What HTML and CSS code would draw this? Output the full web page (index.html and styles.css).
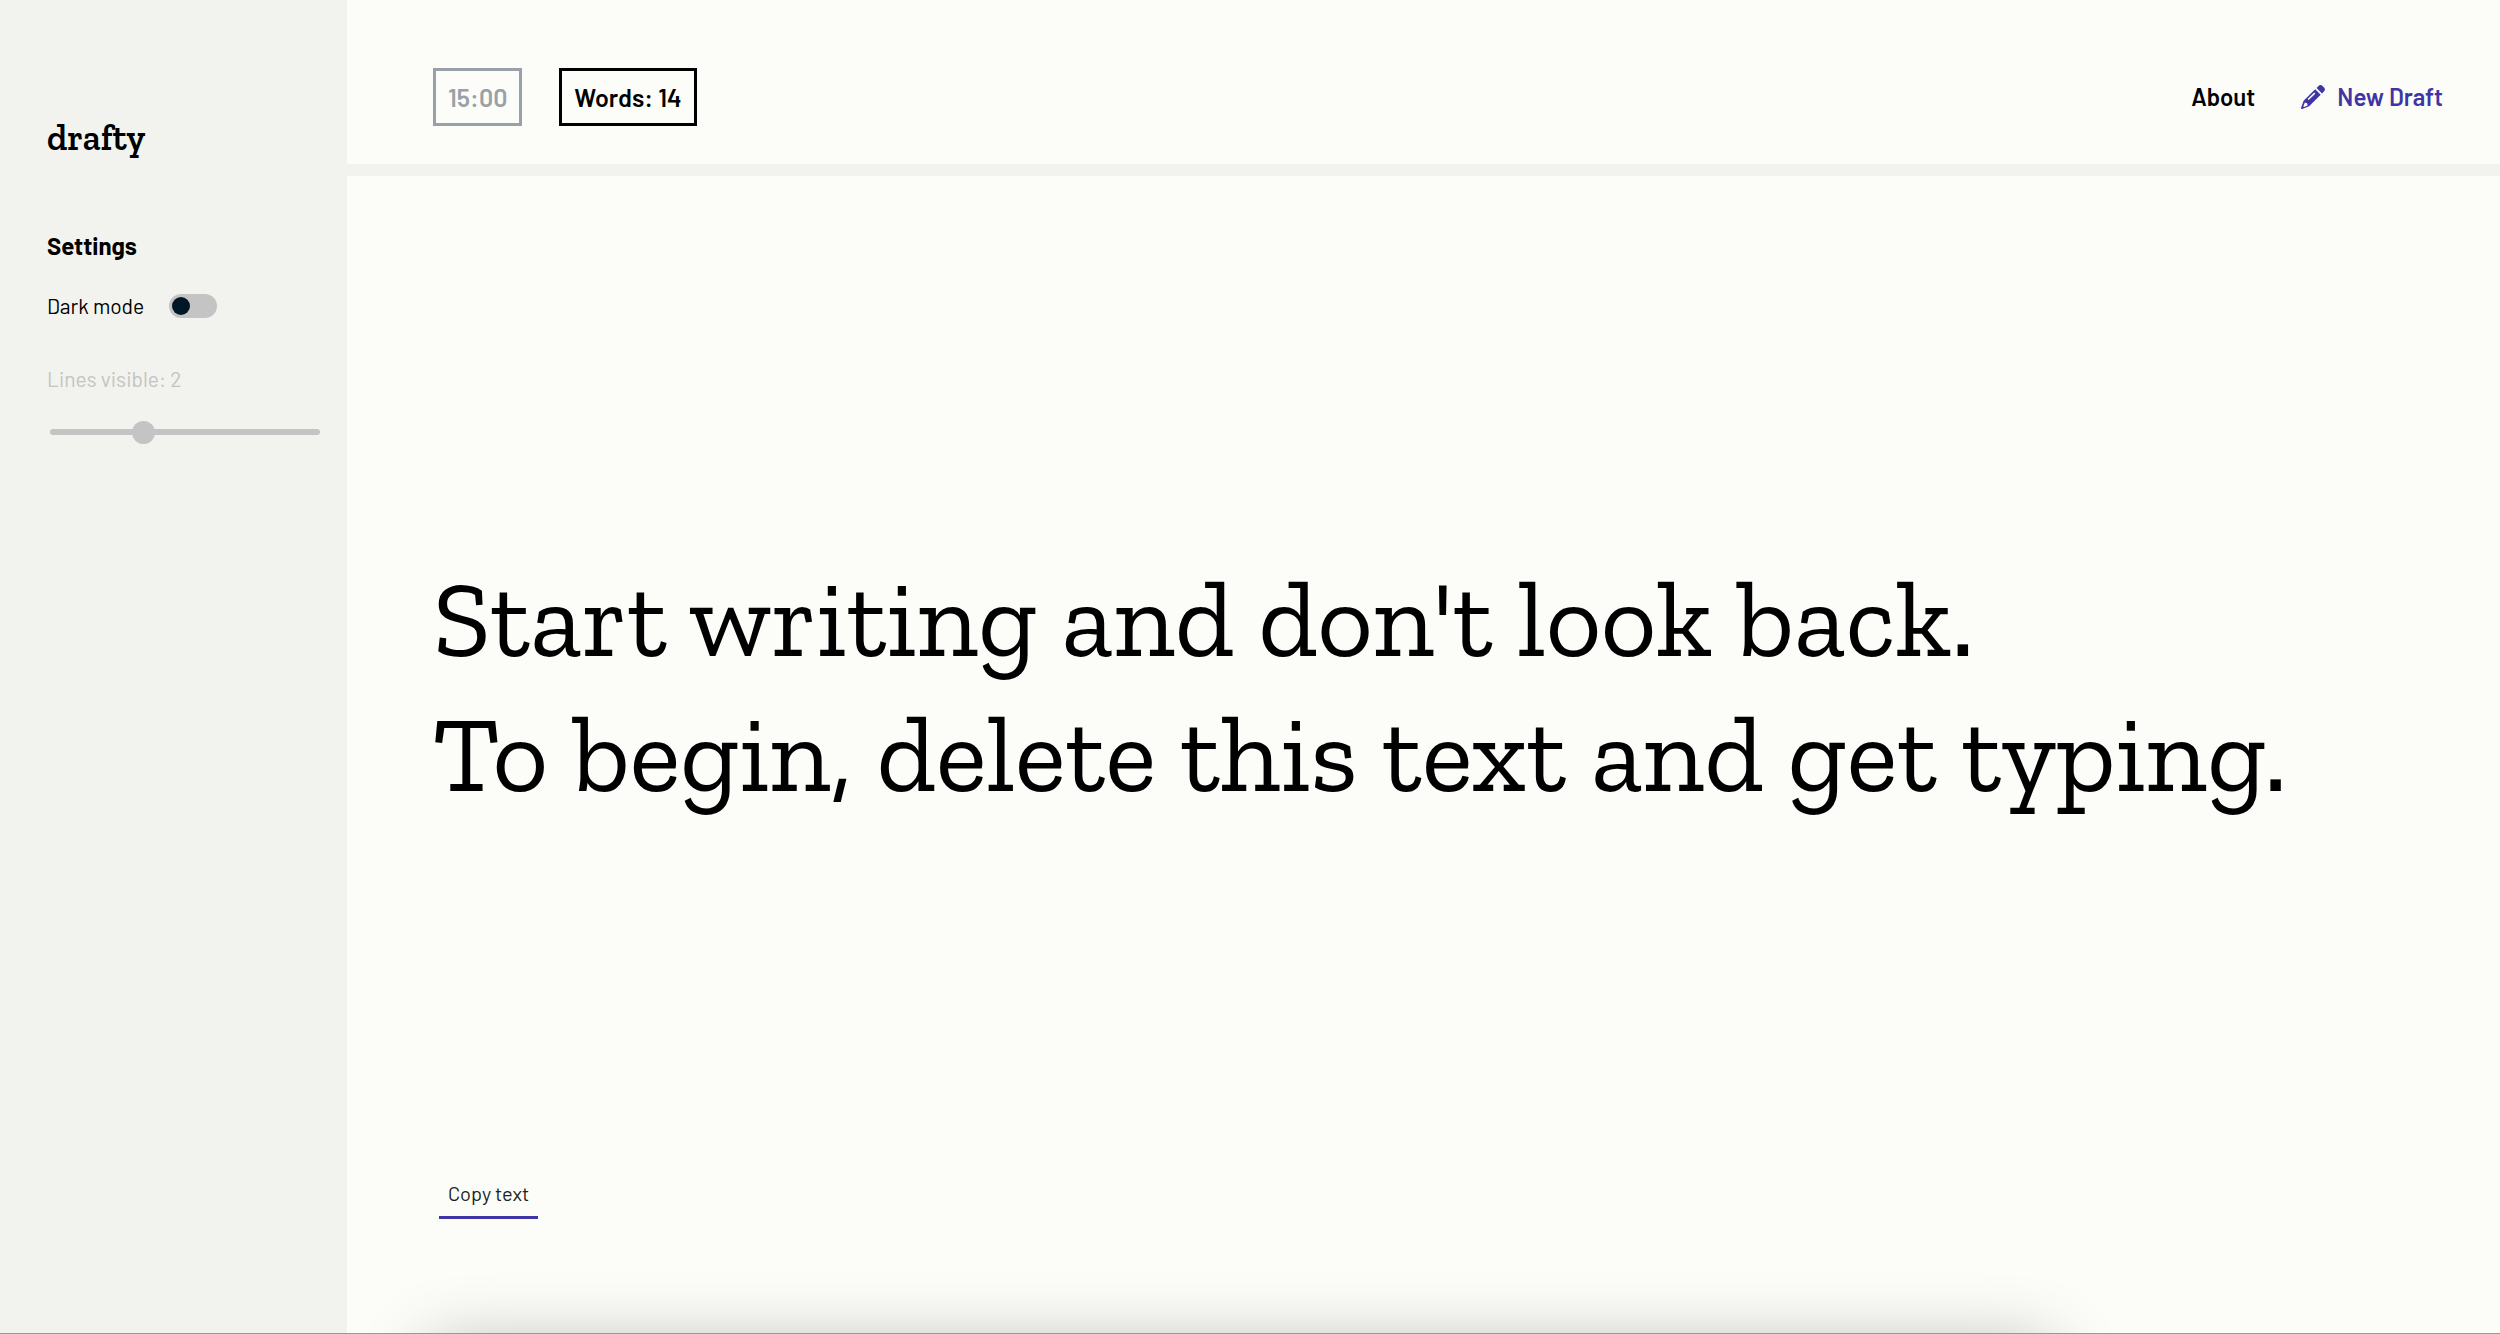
FILE: index.html
```html
<!DOCTYPE html>
<html lang="en">
  <head>
    <meta charset="UTF-8" />
    <meta name="viewport" content="width=device-width, initial-scale=1" />
    <title>drafty</title>
    <link rel="stylesheet" href="styles.css">
  </head>
  <body>
    <div class="app">
      <aside class="sidebar">
        <h1 class="logo">drafty</h1>
        <h2 class="settings-title">Settings</h2>
        <div class="setting-row">
          <label for="darkMode">Dark mode</label>
          <input type="checkbox" id="darkMode" class="toggle" />
        </div>
        <label for="lines" class="lines-label">Lines visible: <span id="linesValue">2</span></label>
        <input type="range" id="lines" class="slider" min="1" max="4" value="2" disabled />
      </aside>

      <div class="page">
        <header class="header">
          <div class="stats">
            <div class="stat timer">15:00</div>
            <div class="stat">Words: <span id="wordCount">14</span></div>
          </div>
          <nav class="nav">
            <a href="#about">About</a>
            <a href="#new" class="new-draft">
              <svg class="pencil" viewBox="0 0 24 24" aria-hidden="true">
                <path fill="currentColor" fill-rule="evenodd" d="M14.2 4.3 19.7 9.8 8.1 21.3 1.3 24Q0 24.2 0 22.9L2.6 15.8ZM13.2 7.6 6.6 14 7.7 15.1 14.3 8.7ZM3.9 17.6 2.3 21.4 3.1 22.1 6.6 20.6 6.1 18.2Z"/>
                <path fill="currentColor" d="M15.6 3 17.5 1.1Q19.6-.9 21.8 1.2L22.8 2.2Q25 4.4 22.9 6.5L21 8.4Z"/>
              </svg>
              New Draft
            </a>
          </nav>
        </header>

        <main class="main">
          <textarea id="draft" class="draft" rows="2" spellcheck="false" aria-label="Draft">Start writing and don't look back.
To begin, delete this text and get typing.</textarea>
          <button id="copyBtn" class="copy-btn">Copy text</button>
        </main>
      </div>
      <div class="bottom-shadow"></div>
    </div>
    <script>
      const draft = document.getElementById("draft");

      draft.addEventListener("input", function () {
        const words = draft.value.trim().split(/\s+/).filter(Boolean);
        document.getElementById("wordCount").textContent = words.length;
      });

      document.getElementById("copyBtn").addEventListener("click", function () {
        draft.select();
        document.execCommand("copy");
      });
    </script>
  </body>
</html>
```
FILE: styles.css
```css
* {
  box-sizing: border-box;
}
body {
  margin: 0;
  font-family: Barlow, Roboto, sans-serif;
  font-size: 21px;
  color: #000;
  background-color: #fcfdf8;
}
.app {
  position: relative;
  display: flex;
  min-height: 100vh;
  overflow: hidden;
  border-bottom: 1px solid #999;
}

/* Sidebar */
.sidebar {
  flex: 0 0 347px;
  padding: 116px 24px 0 47px;
  background-color: #f2f3ee;
}
.logo {
  margin: 0 0 66px;
  font-family: "Zilla Slab", "DejaVu Serif Condensed", "DejaVu Serif", serif;
  font-size: 36px;
  line-height: 44px;
  font-weight: 600;
}
.settings-title {
  margin: 0 0 26px;
  font-size: 24px;
  line-height: 40px;
}
.setting-row {
  display: flex;
  align-items: center;
  gap: 25px;
  margin-bottom: 45px;
  line-height: 28px;
}
.toggle {
  appearance: none;
  width: 48px;
  height: 24px;
  margin: 0;
  padding: 3px;
  border-radius: 12px;
  background-color: #c4c4c4;
  cursor: pointer;
}
.toggle::before {
  content: "";
  display: block;
  width: 18px;
  height: 18px;
  border-radius: 50%;
  background-color: #011627;
}
.toggle:checked::before {
  margin-left: auto;
}
.lines-label {
  display: block;
  line-height: 28px;
  color: #c4c4c4;
}
.slider {
  appearance: none;
  display: block;
  width: 270px;
  height: 6px;
  margin: 36px 3px 0;
  border-radius: 3px;
  background-color: #c4c4c4;
}
.slider::-webkit-slider-thumb {
  appearance: none;
  width: 23px;
  height: 23px;
  border-radius: 50%;
  background-color: #c4c4c4;
}

/* Header */
.page {
  flex: 1;
  display: flex;
  flex-direction: column;
  min-width: 0;
}
.header {
  display: flex;
  justify-content: space-between;
  align-items: center;
  padding: 68px 57px 38px 86px;
  border-bottom: 12px solid #f2f3ee;
  font-size: 24px;
  line-height: 30px;
  font-weight: 600;
}
.stats {
  display: flex;
  gap: 37px;
}
.stat {
  padding: 11px 12px;
  border: 3px solid #000;
  font-size: 25px;
}
.timer {
  color: #99a1a8;
  border-color: #99a1a8;
}
.nav {
  display: flex;
  gap: 46px;
}
.nav a {
  color: #000;
  text-decoration: none;
}
.nav .new-draft {
  display: flex;
  align-items: center;
  gap: 12px;
  color: #4035a5;
}
.pencil {
  width: 24px;
  height: 24px;
}

/* Writing area */
.main {
  flex: 1;
  display: flex;
  flex-direction: column;
  align-items: flex-start;
  padding: 28px 86px 114px;
}
.draft {
  display: block;
  width: 100%;
  margin: auto 0;
  padding: 0;
  border: none;
  outline: none;
  resize: none;
  overflow: hidden;
  background: transparent;
  color: #000;
  font-family: "Zilla Slab", "DejaVu Serif Condensed", "DejaVu Serif", serif;
  font-size: 4.3vw;
  line-height: 1.25;
}
.copy-btn {
  margin-left: 6px;
  padding: 8px 9px 9px;
  border: none;
  border-bottom: 3px solid #4035a5;
  background: transparent;
  color: #222;
  font-family: inherit;
  font-size: 20px;
  line-height: 28px;
  cursor: pointer;
}
.bottom-shadow {
  position: absolute;
  left: 430px;
  right: 450px;
  bottom: -115px;
  height: 100px;
  box-shadow: 0 0 70px rgba(0, 0, 0, 0.3);
  pointer-events: none;
}
```
